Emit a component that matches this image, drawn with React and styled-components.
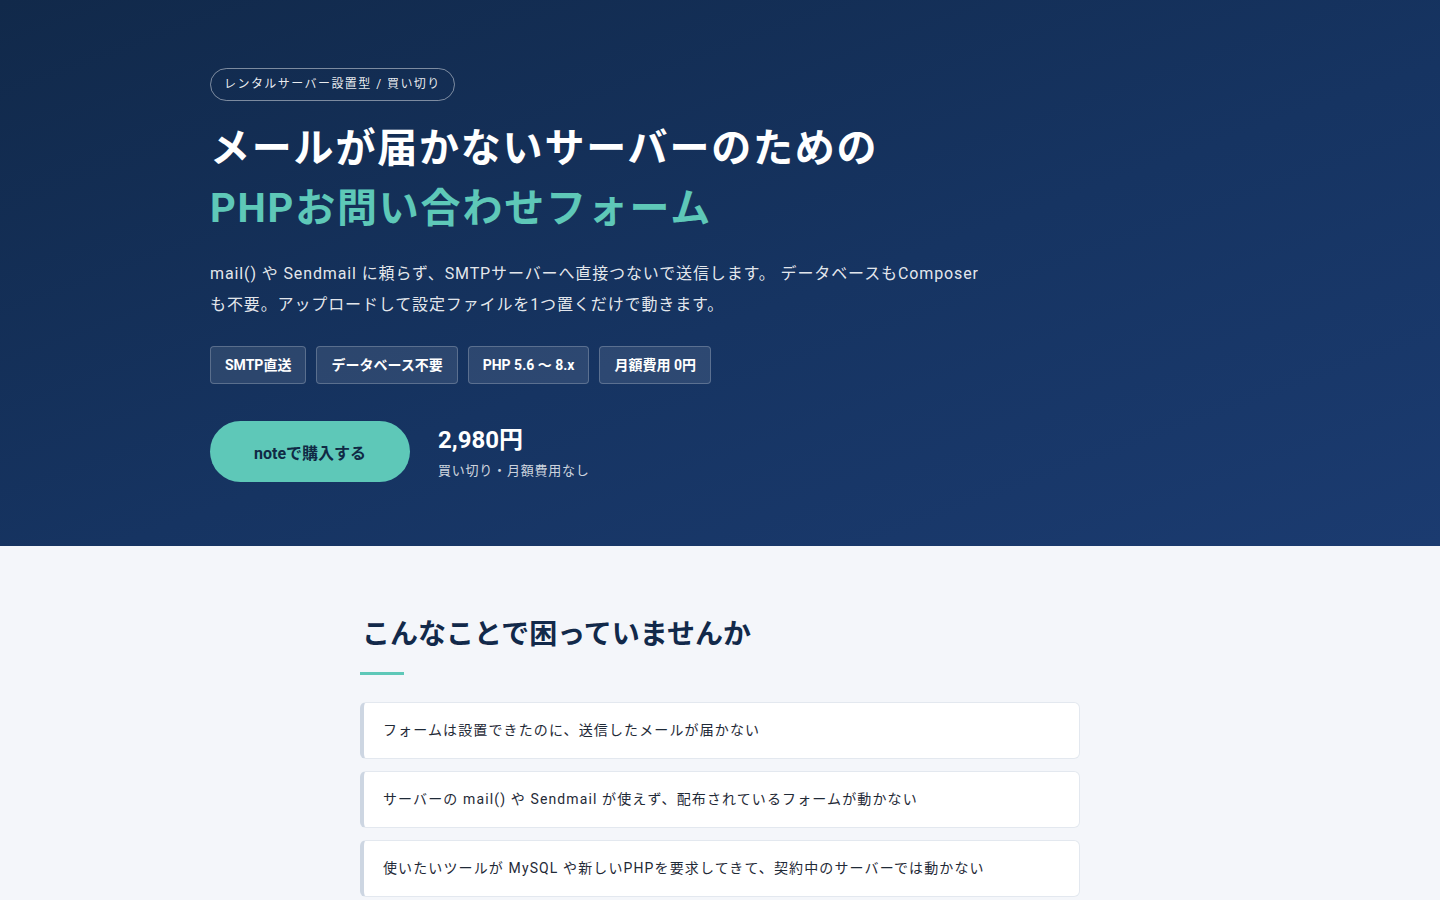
import React from 'react';
import styled, { createGlobalStyle } from 'styled-components';

const GlobalStyle = createGlobalStyle`
    * {
        box-sizing: border-box;
    }
    body {
        margin: 0;
        font-family: Roboto, "Noto Sans CJK JP", "Noto Sans", sans-serif;
        background: #f4f6fa;
        -webkit-font-smoothing: antialiased;
    }
`;

const tags = ['SMTP直送', 'データベース不要', 'PHP 5.6 〜 8.x', '月額費用 0円'];

const problems = [
    'フォームは設置できたのに、送信したメールが届かない',
    'サーバーの mail() や Sendmail が使えず、配布されているフォームが動かない',
    '使いたいツールが MySQL や新しいPHPを要求してきて、契約中のサーバーでは動かない',
];

function App() {
    return (
        <>
            <GlobalStyle />
            <Hero>
                <HeroInner>
                    <Badge>レンタルサーバー設置型 / 買い切り</Badge>
                    <Title>
                        メールが届かないサーバーのための
                        <Accent>PHPお問い合わせフォーム</Accent>
                    </Title>
                    <Lead>
                        mail() や Sendmail に頼らず、SMTPサーバーへ直接つないで送信します。 データベースもComposerも不要。アップロードして設定ファイルを1つ置くだけで動きます。
                    </Lead>
                    <Tags>
                        {tags.map((t) => (
                            <Tag key={t}>{t}</Tag>
                        ))}
                    </Tags>
                    <Buy>
                        <BuyButton href="#">noteで購入する</BuyButton>
                        <Price>
                            <Amount>2,980円</Amount>
                            <PriceNote>買い切り・月額費用なし</PriceNote>
                        </Price>
                    </Buy>
                </HeroInner>
            </Hero>
            <Section>
                <SectionInner>
                    <Heading>こんなことで困っていませんか</Heading>
                    <ProblemList>
                        {problems.map((p) => (
                            <Problem key={p}>{p}</Problem>
                        ))}
                    </ProblemList>
                </SectionInner>
            </Section>
        </>
    );
}

const Hero = styled.header`
    background: linear-gradient(160deg, #11294a 0%, #163462 55%, #1b3b70 100%);
    color: #fff;
    padding: 68px 0 64px;
`;

const HeroInner = styled.div`
    width: 1020px;
    margin: 0 auto;
`;

const Badge = styled.span`
    display: inline-block;
    height: 33px;
    line-height: 31px;
    padding: 0 13px;
    border: 1px solid rgba(255, 255, 255, 0.45);
    border-radius: 17px;
    font-size: 12px;
    letter-spacing: 0.12em;
    color: rgba(255, 255, 255, 0.92);
`;

const Title = styled.h1`
    margin: 18px 0 0;
    font-size: 40px;
    font-weight: 700;
    line-height: 60px;
    letter-spacing: 0.045em;
`;

const Accent = styled.span`
    display: block;
    color: #5ec8b8;
`;

const Lead = styled.p`
    margin: 19px 0 0;
    max-width: 775px;
    font-size: 16px;
    line-height: 31px;
    letter-spacing: 0.055em;
    color: rgba(255, 255, 255, 0.9);
`;

const Tags = styled.div`
    display: flex;
    gap: 10px;
    margin-top: 26px;
`;

const Tag = styled.span`
    height: 38px;
    line-height: 36px;
    padding: 0 14px;
    font-size: 14px;
    font-weight: 700;
    background: rgba(255, 255, 255, 0.1);
    border: 1px solid rgba(255, 255, 255, 0.22);
    border-radius: 4px;
`;

const Buy = styled.div`
    display: flex;
    align-items: center;
    gap: 28px;
    margin-top: 37px;
`;

const BuyButton = styled.a`
    display: flex;
    align-items: center;
    justify-content: center;
    width: 200px;
    height: 61px;
    border-radius: 31px;
    background: #5ec8b8;
    color: #102a45;
    font-size: 16px;
    font-weight: 700;
    text-decoration: none;
`;

const Price = styled.div`
    display: flex;
    flex-direction: column;
    gap: 6px;
`;

const Amount = styled.div`
    font-size: 24px;
    font-weight: 700;
    line-height: 32px;
`;

const PriceNote = styled.div`
    font-size: 13px;
    line-height: 18px;
    letter-spacing: 0.06em;
    color: rgba(255, 255, 255, 0.8);
`;

const Section = styled.section`
    background: #f4f6fa;
    padding: 69px 0 60px;
`;

const SectionInner = styled.div`
    width: 720px;
    margin: 0 auto;
`;

const Heading = styled.h2`
    margin: 0;
    font-size: 28px;
    font-weight: 700;
    line-height: 39px;
    letter-spacing: 0;
    color: #12294a;
    padding-left: 2px;

    &::after {
        content: '';
        display: block;
        width: 44px;
        height: 3px;
        margin: 18px 0 0 -2px;
        background: #5ec8b8;
    }
`;

const ProblemList = styled.div`
    display: flex;
    flex-direction: column;
    gap: 12px;
    margin-top: 27px;
`;

const Problem = styled.div`
    padding: 17px 20px 17px 19px;
    background: #fff;
    border: 1px solid #e3e8ef;
    border-left: 4px solid #cdd6e2;
    border-radius: 6px;
    font-size: 14px;
    line-height: 21px;
    letter-spacing: 0.08em;
    color: #1f2a37;
`;

export default App;
